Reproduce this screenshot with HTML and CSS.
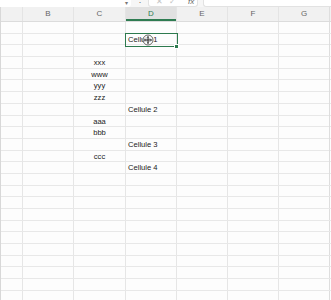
FILE: index.html
```html
<!DOCTYPE html>
<html lang="fr">
<head>
  <meta charset="UTF-8">
  <title>Classeur</title>
  <link rel="stylesheet" href="styles.css">
</head>
<body>

  <div class="toolbar">
    <div class="namebox"><span class="caret">▾</span></div>
    <span class="grip">⋮</span>
    <div class="fxbox"><span>✕</span><span>✓</span><span class="fx">fx</span></div>
    <div class="formula">Cellule 1</div>
  </div>

  <div class="sheet">
    <div class="row head"><span></span><span>B</span><span>C</span><span class="active">D</span><span>E</span><span>F</span><span>G</span></div>

    <div class="row"><span></span><span></span><span></span><span></span><span></span><span></span><span></span></div>
    <div class="row"><span></span><span></span><span></span><span class="txt selected">Cellule 1
        <svg class="cursor" width="12" height="12" viewBox="0 0 12 12">
          <circle cx="6" cy="6" r="5" fill="#fff" fill-opacity="0.6" stroke="#666" stroke-width="1"/>
          <path d="M6 2.5v7M2.5 6h7" stroke="#333" stroke-width="1"/>
          <path d="M6 2l-1.2 1.4h2.4zM6 10l-1.2-1.4h2.4zM2 6l1.4-1.2v2.4zM10 6l-1.4-1.2v2.4z" fill="#333"/>
        </svg>
        <i class="handle"></i></span><span></span><span></span><span></span></div>
    <div class="row"><span></span><span></span><span></span><span></span><span></span><span></span><span></span></div>
    <div class="row"><span></span><span></span><span class="mid">xxx</span><span></span><span></span><span></span><span></span></div>
    <div class="row"><span></span><span></span><span class="mid">www</span><span></span><span></span><span></span><span></span></div>
    <div class="row"><span></span><span></span><span class="mid">yyy</span><span></span><span></span><span></span><span></span></div>
    <div class="row"><span></span><span></span><span class="mid">zzz</span><span></span><span></span><span></span><span></span></div>
    <div class="row"><span></span><span></span><span></span><span class="txt">Cellule 2</span><span></span><span></span><span></span></div>
    <div class="row"><span></span><span></span><span class="mid">aaa</span><span></span><span></span><span></span><span></span></div>
    <div class="row"><span></span><span></span><span class="mid">bbb</span><span></span><span></span><span></span><span></span></div>
    <div class="row"><span></span><span></span><span></span><span class="txt">Cellule 3</span><span></span><span></span><span></span></div>
    <div class="row"><span></span><span></span><span class="mid">ccc</span><span></span><span></span><span></span><span></span></div>
    <div class="row"><span></span><span></span><span></span><span class="txt">Cellule 4</span><span></span><span></span><span></span></div>
    <div class="row"><span></span><span></span><span></span><span></span><span></span><span></span><span></span></div>
    <div class="row"><span></span><span></span><span></span><span></span><span></span><span></span><span></span></div>
    <div class="row"><span></span><span></span><span></span><span></span><span></span><span></span><span></span></div>
    <div class="row"><span></span><span></span><span></span><span></span><span></span><span></span><span></span></div>
    <div class="row"><span></span><span></span><span></span><span></span><span></span><span></span><span></span></div>
    <div class="row"><span></span><span></span><span></span><span></span><span></span><span></span><span></span></div>
    <div class="row"><span></span><span></span><span></span><span></span><span></span><span></span><span></span></div>
    <div class="row"><span></span><span></span><span></span><span></span><span></span><span></span><span></span></div>
    <div class="row"><span></span><span></span><span></span><span></span><span></span><span></span><span></span></div>
    <div class="row"><span></span><span></span><span></span><span></span><span></span><span></span><span></span></div>
    <div class="row"><span></span><span></span><span></span><span></span><span></span><span></span><span></span></div>
  </div>

</body>
</html>
```

FILE: styles.css
```css
body {
  margin: 0;
  background: #fdfdfd;
  font-family: "Liberation Sans", Arial, sans-serif;
  color: #222;
  overflow: hidden;
}

/* barre de formule, coupee en haut */
.toolbar {
  display: flex;
  align-items: center;
  height: 16px;
  margin-top: -9px;
  background: #f6f6f6;
  font-size: 8px;
  color: #999;
}
.namebox {
  width: 131px;
  height: 15px;
  background: #fff;
  border-radius: 0 0 3px 0;
  display: flex;
  align-items: flex-end;
  justify-content: flex-end;
  box-sizing: border-box;
  padding-right: 3px;
}
.caret {
  font-size: 6px;
  color: #777;
  line-height: 8px;
}
.grip {
  width: 17px;
  text-align: center;
  color: #666;
  font-size: 8px;
}
.fxbox {
  width: 50px;
  height: 15px;
  background: #fff;
  border: 1px solid #e2e2e2;
  border-top: none;
  border-radius: 0 0 3px 3px;
  box-sizing: border-box;
  display: flex;
  align-items: flex-end;
  gap: 6px;
  padding: 0 0 0 7px;
  color: #c4c4c4;
  line-height: 8px;
}
.fxbox .fx {
  color: #666;
  font-style: italic;
  margin-left: 6px;
}
.formula {
  flex: 1;
  height: 15px;
  margin-left: 5px;
  background: #fff;
  border: 1px solid #e2e2e2;
  border-top: none;
  border-right: none;
  border-radius: 0 0 0 3px;
  box-sizing: border-box;
  padding: 0 0 0 6px;
  color: #666;
  font-size: 9px;
  line-height: 10px;
}

/* grille */
.sheet {
  width: 331px;
  border-left: 1px solid #d8d8d8;
  box-sizing: border-box;
}
.row {
  display: grid;
  grid-template-columns: 22px 51px 52px 51px 51px 51px 51px;
  height: 11.7px;
  border-bottom: 1px solid #e8e8e8;
  box-sizing: border-box;
  font-size: 7.6px;
  line-height: 12.5px;
  white-space: nowrap;
}
.row span {
  border-right: 1px solid #e6e6e6;
}
.row span:last-child {
  border-right-color: #dedede;
}
.head {
  height: 15px;
  background: #f1f1f1;
  border-bottom-color: #dcdcdc;
  font-size: 8px;
  line-height: 14px;
  color: #666;
  text-align: center;
}
.head span {
  border-right-color: #e4e4e4;
}
.head .active {
  background: #e1e1e1;
  color: #2f7c52;
  box-shadow: inset 0 -2px 0 #2f7c52;
}
.mid {
  text-align: center;
}
.txt {
  padding-left: 2px;
}
.selected {
  position: relative;
  outline: 1.5px solid #2d7a4e;
  outline-offset: 0;
}
.handle {
  position: absolute;
  right: -2.5px;
  bottom: -2.5px;
  width: 3px;
  height: 3px;
  background: #2d7a4e;
  border: 1px solid #fff;
}
.cursor {
  position: absolute;
  left: 16px;
  top: 0.5px;
}
```
